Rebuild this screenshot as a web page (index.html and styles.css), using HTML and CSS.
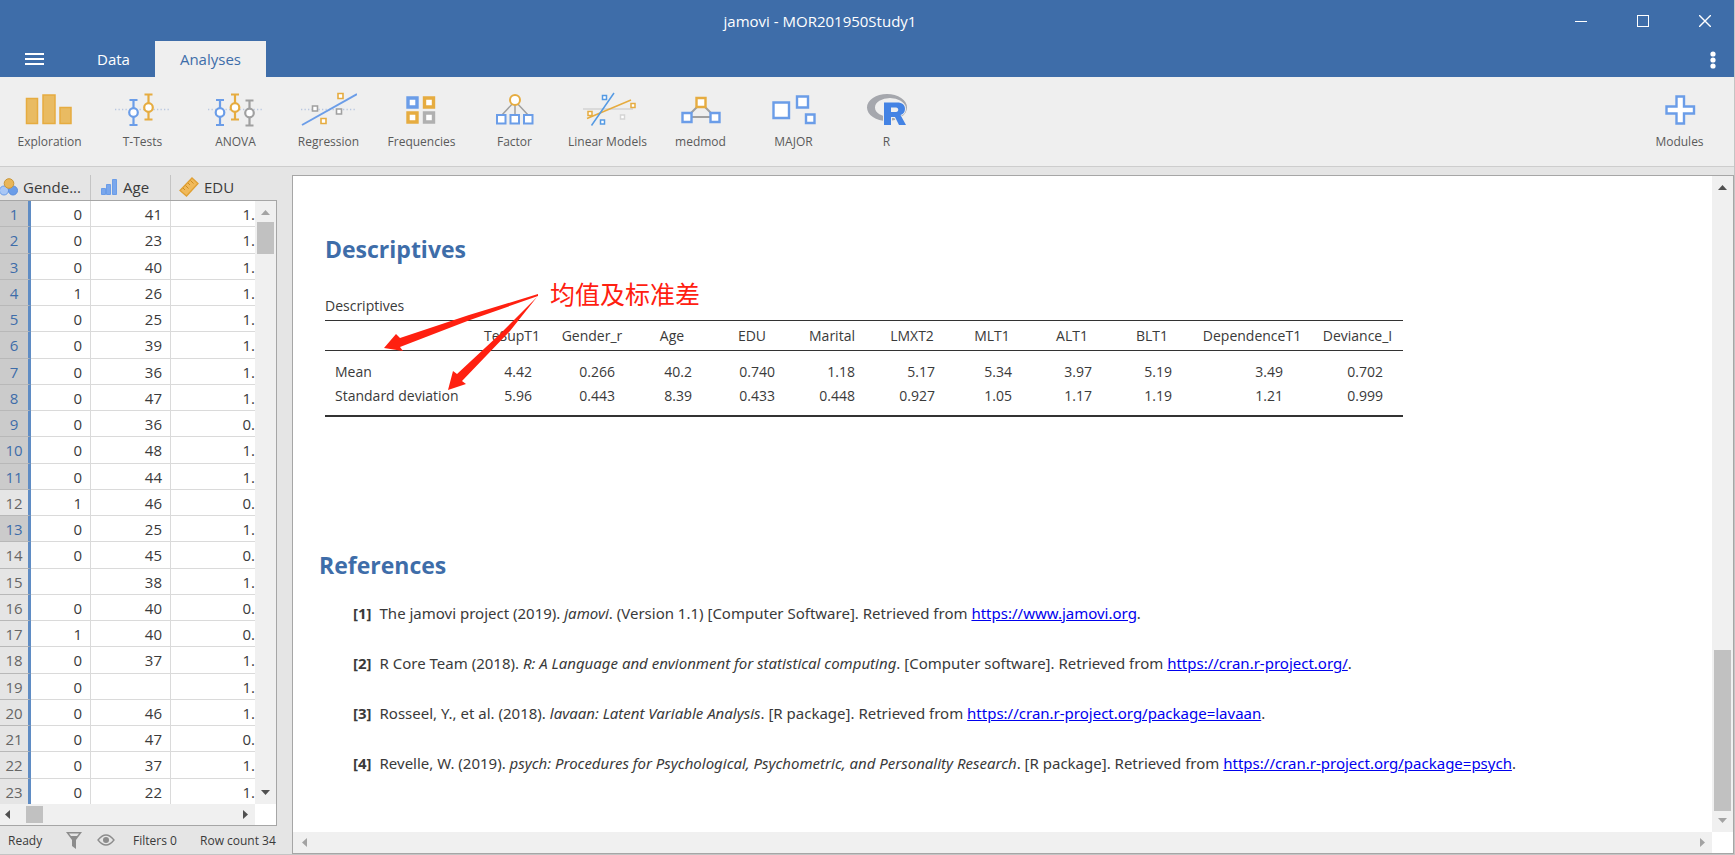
FILE: index.html
```
<!DOCTYPE html>
<html lang="en">
<head>
    <meta charset="UTF-8">
    <meta name="viewport" content="width=device-width, initial-scale=1.0">
    <title>jamovi - MOR201950Study1</title>
    <link rel="stylesheet" href="styles.css">
</head>
<body>
    <header class="titlebar">
        <h1 class="title">jamovi - MOR201950Study1</h1>
        <div class="window-controls">
            <button aria-label="Minimize"><svg width="12" height="12"><path d="M0 6.5H12" stroke="#fff"/></svg></button>
            <button aria-label="Maximize"><svg width="12" height="12"><rect x=".5" y=".5" width="11" height="11" fill="none" stroke="#fff"/></svg></button>
            <button aria-label="Close"><svg width="12" height="12"><path d="M0 0L12 12M12 0L0 12" stroke="#fff" stroke-width="1.4"/></svg></button>
        </div>
    </header>

    <nav class="tabs">
        <button class="menu-btn" aria-label="Menu"><svg width="19" height="12"><path d="M0 1H19M0 6H19M0 11H19" stroke="#fff" stroke-width="2"/></svg></button>
        <button class="tab">Data</button>
        <button class="tab active">Analyses</button>
        <button class="more-btn" aria-label="More"><svg width="6" height="18" fill="#fff"><circle cx="3" cy="3" r="2.6"/><circle cx="3" cy="9" r="2.6"/><circle cx="3" cy="15" r="2.6"/></svg></button>
    </nav>

    <div class="ribbon">
        <button class="ribbon-item">
            <svg width="56" height="36" fill="#e9bb62" stroke="#e6ac40" stroke-width="1.5"><path d="M4.500 7.500h11v25h-11zM21 4h12v28.500H21zM38 16.500h11v16H38z"/></svg>
            Exploration
        </button>
        <button class="ribbon-item">
            <svg width="56" height="36" fill="none" stroke-width="2.2"><path d="M0 18.500H56" stroke="#b9c7e0" stroke-width="1.300" stroke-dasharray="1.300 2.200"/><g stroke="#6b9de8"><path d="M14.500 9h8M14.500 34h8M18.500 9v25"/><circle cx="18.500" cy="21.500" r="4.300" fill="#fff"/></g><g stroke="#e6ac40"><path d="M29.500 3.500h8M29.500 28.500h8M33.500 3.500v25"/><circle cx="33.500" cy="16.500" r="4.300" fill="#fff"/></g></svg>
            T-Tests
        </button>
        <button class="ribbon-item">
            <svg width="56" height="36" fill="none" stroke-width="2.2"><path d="M0 18.500H56" stroke="#b9c7e0" stroke-width="1.300" stroke-dasharray="1.300 2.200"/><g stroke="#6b9de8"><path d="M8 9h8M8 34h8M12 9v25"/><circle cx="12" cy="21.500" r="4.300" fill="#fff"/></g><g stroke="#e6ac40"><path d="M23 3.500h8M23 28.500h8M27 3.500v25"/><circle cx="27" cy="16.500" r="4.300" fill="#fff"/></g><g stroke="#a0a0a0"><path d="M37.500 9.500h8M37.500 34.500h8M41.500 9.500v25"/><circle cx="41.500" cy="22" r="4.300" fill="#fff"/></g></svg>
            ANOVA
        </button>
        <button class="ribbon-item">
            <svg width="56" height="36" fill="#fff" stroke-width="1.6"><path d="M0 18.500H56" stroke="#b9c7e0" stroke-width="1.300" stroke-dasharray="1.300 2.200"/><path d="M1 34L56 3" stroke="#6b9de8" stroke-width="2"/><g stroke="#a0a0a0"><path d="M11.500 15h5v5h-5zM35.500 18h5v5h-5z"/></g><g stroke="#e6ac40"><path d="M37 2.500h5v5h-5zM20 27.500h5v5h-5z"/></g></svg>
            Regression
        </button>
        <button class="ribbon-item">
            <svg width="56" height="36" fill="#fff" stroke-width="3.400"><path d="M14 7h9v9h-9z" stroke="#6b9de8"/><path d="M30.500 7h9v9h-9zM14 22h9v9h-9z" stroke="#e6ac40"/><path d="M30.500 22h9v9h-9z" stroke="#b0b0b0"/></svg>
            Frequencies
        </button>
        <button class="ribbon-item">
            <svg width="56" height="36" fill="#fff" stroke-width="2"><path d="M28 10L14 25M28 10v15M28 10L42 25" stroke="#a0a0a0" stroke-width="1.5"/><circle cx="28" cy="9" r="5" stroke="#e6ac40"/><path d="M10 24h8.500v8.500H10zM23.500 24H32v8.500h-8.500zM37 24h8.500v8.500H37z" stroke="#6b9de8"/></svg>
            Factor
        </button>
        <button class="ribbon-item">
            <svg width="56" height="36" fill="#fff" stroke-width="1.500"><path d="M3 18h50" stroke="#dadada" stroke-width="2"/><path d="M40.500 24h4v4h-4z" stroke="#d5d5d5"/><path d="M7 27.500L51 9M51 12.500h4v4h-4zM8 20.500h4v4H8z" stroke="#e6ac40"/><path d="M11.500 34.500L34 2M22.500 4.500h4v4h-4zM20.500 29h4v4h-4z" stroke="#559ae3"/></svg>
            Linear Models
        </button>
        <button class="ribbon-item">
            <svg width="56" height="36" fill="#fff" stroke-width="2.400"><path d="M28 12L14 26H42z" fill="none" stroke="#a0a0a0" stroke-width="2"/><path d="M23.500 7h9v9h-9z" stroke="#e6ac40"/><path d="M9.500 22h9v9h-9zM37.500 22h9v9h-9z" stroke="#6b9de8"/></svg>
            medmod
        </button>
        <button class="ribbon-item">
            <svg width="56" height="36" fill="#fff" stroke="#6b9de8" stroke-width="2.400"><path d="M7.500 11.500H23V27H7.500zM31 5.500h11v11H31zM40 23.500h8.500V32H40z"/></svg>
            MAJOR
        </button>
        <button class="ribbon-item">
            <svg width="56" height="36"><path fill="#a5a7ad" fill-rule="evenodd" d="M8 16.500a20 13.500 0 1 0 40 0a20 13.500 0 1 0 -40 0zM16 16.500a15 9.500 0 1 0 30 0a15 9.500 0 1 0 -30 0z"/><path fill="#4483e4" stroke="#efefef" stroke-width="2" paint-order="stroke" fill-rule="evenodd" d="M25 11.500H38C43.500 11.500 46 14 46 18C46 21 44 23.500 41.500 24L47 34H40L36 26H32V34H25zM32 16.500V21H37C40 21 40 16.500 37 16.500z"/></svg>
            R
        </button>
        <button class="ribbon-item modules">
            <svg width="56" height="36" fill="#fff" stroke="#6b9de8" stroke-width="2.400"><path d="M24.500 5.500h7.500v10h10v7H32v10h-7.500v-10h-10v-7h10z"/></svg>
            Modules
        </button>
    </div>

    <main class="workspace">
        <section class="data-panel">
            <div class="column-headers">
                <div class="column-header gender">
                    <svg width="18" height="18"><circle cx="4" cy="12.500" r="4.500" fill="#a9c7f5" stroke="#6b9de8"/><circle cx="13" cy="12.500" r="4.500" fill="#6b9de8" stroke="#5c8fde"/><circle cx="9" cy="5.500" r="4.800" fill="#e9b658" stroke="#c99638"/></svg>
                    Gende...
                </div>
                <div class="column-header age">
                    <svg width="18" height="18" fill="#7aa7ec" stroke="#6b9de8"><path d="M1.500 10.500h4v6h-4zM6.500 6.500h4v10h-4zM12.500 1.500h4v15h-4z"/></svg>
                    Age
                </div>
                <div class="column-header edu">
                    <svg width="20" height="20"><path d="M1 13.500L13 1L19 6.500L7.500 19z" fill="#f0b95a" stroke="#e0a033" stroke-width="1.300"/><path d="M4 11l2 2M6.500 8.500l3 3M9 6l2 2M11.500 3.500l3 3" stroke="#cd8d22"/></svg>
                    EDU
                </div>
            </div>
            <div class="grid">
                <div class="grid-cells">
                    <table class="data-table">
                        <tbody id="dataRows"></tbody>
                    </table>
                </div>
                <div class="scroll-v">
                    <svg class="arrow" width="9" height="5" fill="#a3a3a3"><path d="M0 5L4.500 0L9 5z"/></svg>
                    <div class="thumb"></div>
                    <svg class="arrow end" width="9" height="5" fill="#505050"><path d="M0 0H9L4.500 5z"/></svg>
                </div>
                <div class="scroll-h">
                    <svg class="arrow" width="5" height="9" fill="#505050"><path d="M5 0V9L0 4.500z"/></svg>
                    <div class="thumb"></div>
                    <svg class="arrow end" width="5" height="9" fill="#505050"><path d="M0 0V9L5 4.500z"/></svg>
                </div>
            </div>
            <footer class="statusbar">
                <span class="ready">Ready</span>
                <svg width="16" height="18"><path d="M0 1H16L10 9V18L6 15V9z" fill="#8c8c8c"/><path d="M3 2.500H13L11 5H5z" fill="#e5e5e5"/></svg>
                <svg class="eye" width="18" height="12"><path d="M1 6Q9 -4 17 6Q9 16 1 6z" fill="none" stroke="#8c8c8c" stroke-width="1.300"/><circle cx="9" cy="6" r="3" fill="#8c8c8c"/></svg>
                <span class="filters">Filters 0</span>
                <span>Row count 34</span>
            </footer>
        </section>

        <section class="results-panel">
            <div class="results">
                <h2>Descriptives</h2>
                <table class="results-table">
                    <caption>Descriptives</caption>
                    <thead>
                        <tr>
                            <th class="name"></th>
                            <th>TeSupT1</th>
                            <th>Gender_r</th>
                            <th>Age</th>
                            <th>EDU</th>
                            <th>Marital</th>
                            <th>LMXT2</th>
                            <th>MLT1</th>
                            <th>ALT1</th>
                            <th>BLT1</th>
                            <th class="dependence">DependenceT1</th>
                            <th class="deviance">Deviance_I</th>
                        </tr>
                    </thead>
                    <tbody>
                        <tr>
                            <td class="name">Mean</td>
                            <td class="short">4.42</td>
                            <td>0.266</td>
                            <td class="short">40.2</td>
                            <td>0.740</td>
                            <td>1.18</td>
                            <td>5.17</td>
                            <td class="short">5.34</td>
                            <td class="short">3.97</td>
                            <td class="short">5.19</td>
                            <td class="dependence">3.49</td>
                            <td class="short">0.702</td>
                        </tr>
                        <tr>
                            <td class="name">Standard deviation</td>
                            <td class="short">5.96</td>
                            <td>0.443</td>
                            <td class="short">8.39</td>
                            <td>0.433</td>
                            <td>0.448</td>
                            <td>0.927</td>
                            <td class="short">1.05</td>
                            <td class="short">1.17</td>
                            <td class="short">1.19</td>
                            <td class="dependence">1.21</td>
                            <td class="short">0.999</td>
                        </tr>
                    </tbody>
                </table>

                <h2 class="references-title">References</h2>
                <ol class="references">
                    <li><b>[1]</b><span>The jamovi project (2019). <i>jamovi</i>. (Version 1.1) [Computer Software]. Retrieved from <a href="https://www.jamovi.org">https://www.jamovi.org</a>.</span></li>
                    <li><b>[2]</b><span>R Core Team (2018). <i>R: A Language and envionment for statistical computing</i>. [Computer software]. Retrieved from <a href="https://cran.r-project.org/">https://cran.r-project.org/</a>.</span></li>
                    <li><b>[3]</b><span>Rosseel, Y., et al. (2018). <i>lavaan: Latent Variable Analysis</i>. [R package]. Retrieved from <a href="https://cran.r-project.org/package=lavaan">https://cran.r-project.org/package=lavaan</a>.</span></li>
                    <li><b>[4]</b><span>Revelle, W. (2019). <i>psych: Procedures for Psychological, Psychometric, and Personality Research</i>. [R package]. Retrieved from <a href="https://cran.r-project.org/package=psych">https://cran.r-project.org/package=psych</a>.</span></li>
                </ol>

                <!-- red note over the table -->
                <div class="note">
                    <svg width="155" height="98" fill="#ff2010"><path d="M154 1L85 22L16 45L12 41L0 55L19 58L16 54L86 27L154 3z"/><path d="M153 4L116 41L73 81L69 78L64 97L82 91L78 88L126 38z"/></svg>
                    <span lang="zh-CN">均值及标准差</span>
                </div>
            </div>
            <div class="scroll-v">
                <svg class="arrow" width="9" height="5" fill="#505050"><path d="M0 5L4.500 0L9 5z"/></svg>
                <div class="thumb"></div>
                <svg class="arrow end" width="9" height="5" fill="#a3a3a3"><path d="M0 0H9L4.500 5z"/></svg>
            </div>
            <div class="scroll-h">
                <svg class="arrow" width="5" height="9" fill="#a3a3a3"><path d="M5 0V9L0 4.500z"/></svg>
                <svg class="arrow end" width="5" height="9" fill="#a3a3a3"><path d="M0 0V9L5 4.500z"/></svg>
            </div>
        </section>
    </main>

    <script>
        // gender, age, edu
        const rows = [
            ['0', '41', '1.'], ['0', '23', '1.'], ['0', '40', '1.'], ['1', '26', '1.'],
            ['0', '25', '1.'], ['0', '39', '1.'], ['0', '36', '1.'], ['0', '47', '1.'],
            ['0', '36', '0.'], ['0', '48', '1.'], ['0', '44', '1.'], ['1', '46', '0.'],
            ['0', '25', '1.'], ['0', '45', '0.'], ['', '38', '1.'], ['0', '40', '0.'],
            ['1', '40', '0.'], ['0', '37', '1.'], ['0', '', '1.'], ['0', '46', '1.'],
            ['0', '47', '0.'], ['0', '37', '1.'], ['0', '22', '1.']
        ];
        const selected = [1, 2, 3, 4, 5, 6, 7, 8, 9, 10, 11, 13];
        const body = document.getElementById('dataRows');

        rows.forEach((row, i) => {
            const tr = document.createElement('tr');
            const th = document.createElement('th');
            th.textContent = i + 1;
            if (selected.includes(i + 1)) th.className = 'selected';
            tr.appendChild(th);
            row.forEach((value) => {
                const td = document.createElement('td');
                td.textContent = value;
                tr.appendChild(td);
            });
            body.appendChild(tr);
        });
    </script>
</body>
</html>
```
FILE: styles.css
```
* {
    box-sizing: border-box;
}
body {
    margin: 0;
    height: 100vh;
    display: flex;
    flex-direction: column;
    overflow: hidden;
    font-family: "Open Sans", "Noto Sans", sans-serif;
    font-size: 14px;
    color: #3a3a3a;
    background-color: #e5e5e5;
    border-right: 1px solid #c4c4c4;
    border-bottom: 1px solid #c4c4c4;
}
button {
    border: none;
    padding: 0;
    background: none;
    font-family: inherit;
    color: inherit;
    cursor: pointer;
}
svg {
    display: block;
    flex: none;
}
.titlebar {
    height: 41px;
    flex: none;
    display: flex;
    align-items: center;
    background-color: #3e6da9;
    color: white;
}
.title {
    flex: 1;
    margin: 0;
    padding-left: 92px;
    font-size: 15px;
    font-weight: normal;
    text-align: center;
}
.window-controls {
    display: flex;
}
.window-controls button {
    width: 62px;
    height: 40px;
    padding-left: 4px;
    display: flex;
    align-items: center;
    justify-content: center;
}
.tabs {
    height: 36px;
    flex: none;
    display: flex;
    background-color: #3e6da9;
    color: white;
}
.menu-btn {
    width: 72px;
    padding-left: 25px;
}
.tab {
    padding: 0 25px;
    font-size: 15px;
}
.tab.active {
    background-color: #efefef;
    color: #3e6da9;
}
.more-btn {
    margin-left: auto;
    padding: 2px 18px 0 18px;
}
.ribbon {
    height: 90px;
    flex: none;
    display: flex;
    padding: 14px 8px 0 3px;
    background-color: #efefef;
    border-bottom: 1px solid #cdcdcd;
}
.ribbon-item {
    width: 93px;
    height: 60px;
    flex: none;
    display: flex;
    flex-direction: column;
    align-items: center;
    gap: 7px;
    font-size: 12px;
    line-height: 16px;
    color: #5a5a5a;
}
.modules {
    margin-left: auto;
}
.workspace {
    flex: 1;
    min-height: 0;
    display: flex;
    gap: 15px;
    padding-top: 8px;
}
.data-panel {
    width: 277px;
    flex: none;
    display: flex;
    flex-direction: column;
}
.column-headers {
    height: 25px;
    flex: none;
    display: flex;
}
.column-header {
    display: flex;
    align-items: center;
    gap: 5px;
    padding-bottom: 2px;
    font-size: 15px;
    border-right: 1px solid #c4c4c4;
}
.column-header.gender {
    width: 91px;
}
.column-header.age {
    width: 80px;
    padding-left: 9px;
}
.column-header.edu {
    padding-left: 8px;
    border-right: none;
}
.grid {
    flex: 1;
    min-height: 0;
    display: grid;
    grid-template-columns: 1fr 21px;
    grid-template-rows: 1fr 21px;
    background-color: white;
    border: 1px solid #a6a6a6;
    border-left: none;
}
.grid-cells {
    overflow: hidden;
}
.data-table {
    width: 255px;
    table-layout: fixed;
    border-collapse: separate;
    border-spacing: 0;
    font-size: 15px;
    line-height: 20px;
}
.data-table tr {
    height: 26px;
}
.data-table tr:nth-child(4n+2) {
    height: 27px;
}
.data-table th,
.data-table td {
    padding: 0 8px 0 0;
    text-align: right;
    border-right: 1px solid #dadada;
    border-bottom: 1px solid #dadada;
}
.data-table th {
    width: 31px;
    padding: 0;
    font-weight: normal;
    text-align: center;
    color: #666;
    background-color: #e5e5e5;
    border-right: 3px solid #5f8cc4;
    border-bottom-color: #b8b8b8;
}
.data-table th.selected {
    color: #3e6da9;
    background-color: #cbcbcb;
}
.data-table td:nth-child(2) {
    width: 60px;
}
.data-table td:nth-child(3) {
    width: 80px;
}
.data-table td:last-child {
    padding-right: 0;
    border-right: none;
}
.scroll-v,
.scroll-h {
    display: flex;
    align-items: center;
    background-color: #f0f0f0;
}
.scroll-v {
    flex-direction: column;
    padding: 9px 0;
}
.scroll-h {
    padding: 0 7px 0 5px;
}
.scroll-v .end {
    margin-top: auto;
}
.scroll-h .end {
    margin-left: auto;
}
.thumb {
    background-color: #c1c1c1;
}
.grid .scroll-v .thumb {
    width: 17px;
    height: 32px;
    margin-top: 7px;
}
.grid .scroll-h .thumb {
    width: 17px;
    height: 17px;
    margin-left: 16px;
}
.statusbar {
    height: 28px;
    flex: none;
    display: flex;
    align-items: center;
    padding-left: 8px;
    font-size: 12px;
    white-space: nowrap;
}
.statusbar .ready {
    width: 58px;
}
.statusbar .eye {
    margin: 0 18px 0 15px;
}
.statusbar .filters {
    width: 67px;
}
.results-panel {
    flex: 1;
    min-width: 0;
    display: grid;
    grid-template-columns: 1fr 21px;
    grid-template-rows: 1fr 21px;
    background-color: white;
    border: 1px solid #a6a6a6;
}
.results {
    position: relative;
    overflow: hidden;
    padding: 56px 0 0 32px;
}
.results h2 {
    margin: 0;
    font-size: 23px;
    line-height: 34px;
    color: #3e6da9;
}
.results-table {
    width: 1078px;
    margin-top: 28px;
    table-layout: fixed;
    border-collapse: separate;
    border-spacing: 0;
    border-bottom: 2px solid #333;
    line-height: 24px;
}
.results-table caption {
    text-align: left;
    padding-bottom: 2px;
}
.results-table th {
    width: 80px;
    height: 31px;
    padding: 0;
    font-weight: normal;
    text-align: center;
    border-top: 1px solid #333;
    border-bottom: 1px solid #333;
}
.results-table th.name {
    width: 147px;
}
.results-table th.dependence {
    width: 120px;
}
.results-table th.deviance {
    width: 91px;
}
.results-table td {
    padding: 0 17px 0 0;
    text-align: right;
}
.results-table td.short {
    padding-right: 20px;
}
.results-table td.dependence {
    padding-right: 29px;
}
.results-table td.name {
    padding: 0 0 0 10px;
    text-align: left;
    white-space: nowrap;
}
.results-table tbody tr:first-child td {
    padding-top: 9px;
}
.results-table tbody tr:last-child td {
    padding-bottom: 7px;
}
.results .references-title {
    margin: 131px 0 0 -6px;
}
.references {
    margin: 19px 0 0 0;
    padding: 0 0 0 28px;
    list-style: none;
    font-family: "Noto Sans", sans-serif;
    font-size: 15px;
    line-height: 24px;
}
.references li {
    display: flex;
    gap: 8px;
    margin-bottom: 26px;
    white-space: nowrap;
}
.references a {
    color: #0000ee;
}
.note {
    position: absolute;
    left: 91px;
    top: 117px;
    display: flex;
    gap: 11px;
    font-family: "Noto Sans CJK SC", sans-serif;
    font-size: 25px;
    line-height: 0;
    color: #ff2010;
}
.results-panel .scroll-v .thumb {
    width: 17px;
    height: 161px;
    margin-top: auto;
}
.results-panel .scroll-v .end {
    margin-top: 7px;
}
.results-panel .scroll-h {
    padding-left: 9px;
}
```
